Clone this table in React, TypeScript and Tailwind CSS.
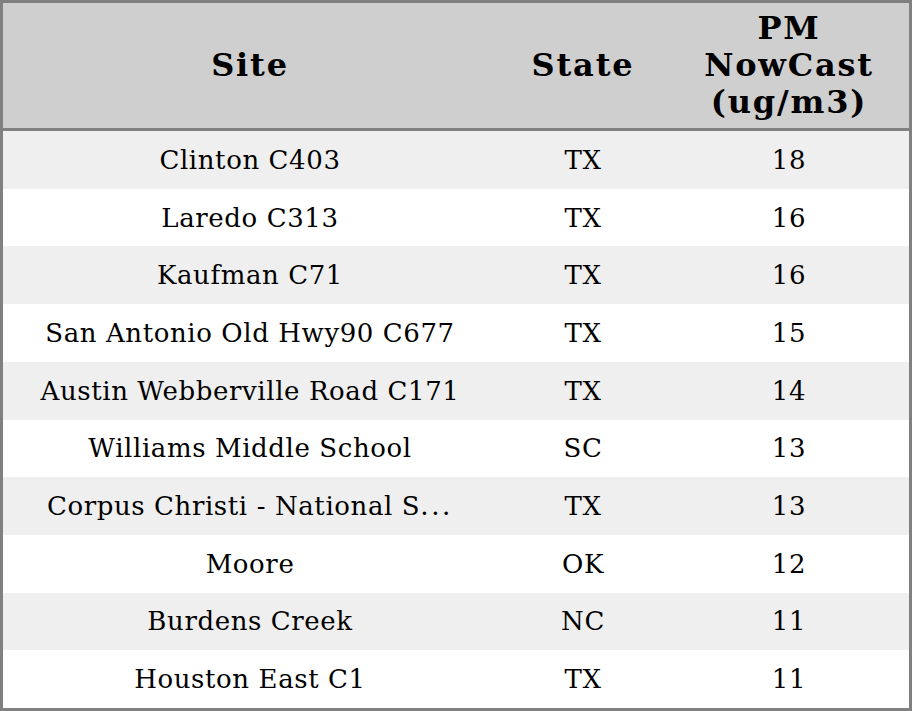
import React from 'react';

const rows: [string, string, string][] = [
  ['Clinton C403', 'TX', '18'],
  ['Laredo C313', 'TX', '16'],
  ['Kaufman C71', 'TX', '16'],
  ['San Antonio Old Hwy90 C677', 'TX', '15'],
  ['Austin Webberville Road C171', 'TX', '14'],
  ['Williams Middle School', 'SC', '13'],
  ['Corpus Christi - National S', 'TX', '13'],
  ['Moore', 'OK', '12'],
  ['Burdens Creek', 'NC', '11'],
  ['Houston East C1', 'TX', '11'],
];

const App: React.FC = () => {
  return (
    <div className="w-[912px] h-[711px] bg-white border-[3px] border-[#808080] flex flex-col text-black font-['DejaVu_Serif',serif] overflow-hidden">
      {/* Header */}
      <div className="h-[128px] shrink-0 bg-[#cfcfcf] border-b-[3px] border-[#808080] flex items-center text-[32px] font-bold leading-[37px] tracking-[1.8px] text-center">
        <div className="w-[494px]">Site</div>
        <div className="w-[172px]">State</div>
        <div className="w-[240px]">
          PM
          <br />
          NowCast
          <br />
          (ug/m3)
        </div>
      </div>

      {/* Rows */}
      <div className="flex-1 flex flex-col">
        {rows.map(([site, state, value], i) => (
          <div
            key={i}
            className={`flex-1 flex items-center text-[26px] leading-[normal] tracking-[0.6px] text-center ${i % 2 === 0 ? 'bg-[#efefef]' : 'bg-white'}`}
          >
            <div className="w-[494px] whitespace-nowrap">
              {site}
              {i === 6 && <span className="tracking-[2.7px]">...</span>}
            </div>
            <div className="w-[172px]">{state}</div>
            <div className="w-[240px]">{value}</div>
          </div>
        ))}
      </div>
    </div>
  );
};

export default App;
